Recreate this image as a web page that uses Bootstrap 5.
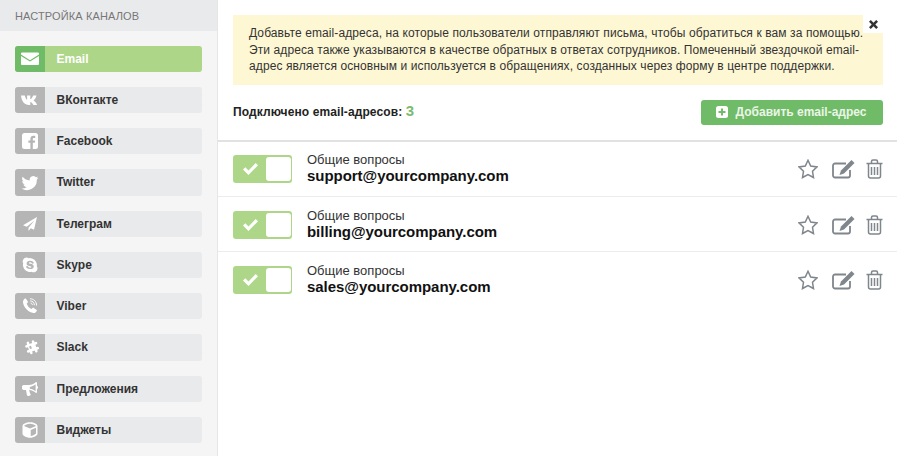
<!DOCTYPE html>
<html lang="ru">

<head>
    <meta charset="UTF-8">
    <meta name="viewport" content="width=device-width, initial-scale=1.0">
    <title>Настройка каналов</title>
    <link href="https://cdn.jsdelivr.net/npm/bootstrap@5.3.3/dist/css/bootstrap.min.css" rel="stylesheet">
    <style>
        body {
            background-color: #fff;
            font-family: "Liberation Sans", Arial, sans-serif;
            color: #222;
            height: 456px;
            overflow: hidden;
        }

        .side-panel {
            width: 218px;
            height: 456px;
            background-color: #f5f5f5;
            border-right: 1px solid #e6e6e6;
        }

        .side-title {
            height: 31px;
            line-height: 33px;
            padding-left: 15px;
            background-color: #e9eaec;
            color: #777;
            font-size: 11px;
            letter-spacing: .12px;
        }

        .side-list {
            padding: 15px 15px 0;
            gap: 15px;
        }

        .chan-item {
            height: 26px;
            width: 187px;
            background-color: #e9eaec;
            border-radius: 3px;
            color: #333;
            font-size: 12px;
            font-weight: 700;
            text-decoration: none;
            overflow: hidden;
        }

        .chan-item:nth-child(4),
        .chan-item:nth-child(8) {
            height: 27px;
            padding-bottom: 1px;
        }

        .chan-item.active-chan {
            background-color: #aed688;
            color: #fff;
        }

        .chan-icon {
            width: 30px;
            background-color: #b5b5b5;
            margin-right: 11.5px;
        }

        .chan-item:nth-child(4) .chan-icon,
        .chan-item:nth-child(8) .chan-icon {
            height: 27px !important;
            margin-bottom: -1px;
        }

        .active-chan .chan-icon {
            background-color: #6fbb68;
        }

        .chan-icon svg {
            width: 18px;
            height: 18px;
            fill: #fff;
        }

        .main-panel {
            width: 679px;
        }

        .info-box {
            margin: 15px 14px 0 15px;
            padding: 10px 16px 0;
            height: 70px;
            background-color: #fef7d3;
            border: 0;
            border-radius: 0;
            color: #333;
            font-size: 12px;
            line-height: 16.5px;
            letter-spacing: .1px;
        }

        .info-close {
            top: 0;
            right: 0;
            width: 20px;
            height: 18px;
            background-color: #fff;
        }

        .info-close svg {
            width: 9px;
            height: 9px;
            fill: #333;
        }

        .count-bar {
            height: 57px;
            padding: 0 14px 0 15px;
            border-bottom: 2px solid #e2e2e2;
            font-size: 12px;
            font-weight: 700;
        }

        .count-text {
            margin-bottom: 2px;
            letter-spacing: .1px;
        }

        .count-num {
            color: #7dbb72;
            font-size: 15px;
        }

        .btn-add-mail {
            width: 182px;
            height: 25px;
            padding: 0 2px 2px 0;
            border: 0;
            border-radius: 3px;
            background-color: #70bb68;
            color: #eaf5e6;
            font-size: 12px;
            font-weight: 700;
        }

        .btn-add-mail svg {
            width: 12px;
            height: 12px;
        }

        .mail-row {
            height: 55px;
            padding: 1px 14px 0 15px;
            border: 0;
            border-bottom: 1px solid #ececec;
            border-radius: 0;
        }

        .mail-row:first-child {
            padding: 0 14px 1px 15px;
        }

        .mail-toggle {
            width: 59px;
            height: 28px;
            background-color: #aed688;
            border-radius: 3px;
            padding: 2px 1px 2px 2px;
            margin-right: 15px;
        }

        .mail-toggle svg {
            width: 15px;
            height: 12px;
            fill: #fff;
            margin-left: 8px;
        }

        .toggle-knob {
            width: 25px;
            height: 24px;
            margin-left: auto;
            background-color: #fff;
            border-radius: 3px;
        }

        .mail-text {
            margin-bottom: 2px;
        }

        .mail-label {
            font-size: 13px;
            line-height: 15px;
            color: #333;
        }

        .mail-addr {
            font-size: 15px;
            line-height: 17px;
            font-weight: 700;
            color: #111;
            letter-spacing: -.04px;
        }

        .row-tools svg {
            fill: none;
            stroke: #7f868c;
            stroke-width: 1.5;
        }

        .tool-star {
            margin-right: 14px;
        }

        .tool-edit {
            margin-right: 11px;
        }
    </style>
</head>

<body>
    <div class="d-flex">
        <div class="side-panel flex-shrink-0">
            <div class="side-title">НАСТРОЙКА КАНАЛОВ</div>
            <div class="side-list d-flex flex-column">
                <a href="#" class="chan-item active-chan d-flex align-items-center">
                    <span class="chan-icon h-100 d-flex align-items-center justify-content-center">
                        <svg viewBox="0 0 18 18"><path d="M1 2.500h16a1 1 0 0 1 1 1v1L9 10.200 0 4.500v-1a1 1 0 0 1 1-1zM0 6l9 5.600L18 6v8a1 1 0 0 1-1 1H1a1 1 0 0 1-1-1z"/></svg>
                    </span>Email
                </a>
                <a href="#" class="chan-item d-flex align-items-center">
                    <span class="chan-icon h-100 d-flex align-items-center justify-content-center">
                        <svg viewBox="0 0 18 18"><path d="M0 4.500h3.800c.5 2 1.300 3.800 2.300 4.400V4.500h3.200v3.800c1.200-.4 2.200-2 2.800-3.800h3.400c-.5 2.300-1.700 4-2.900 4.900 1.300.7 2.800 2.400 3.500 4.600h-3.700c-.7-1.800-1.900-2.900-3.100-3.100V14H8C3.500 14 .6 10.200 0 4.500z"/></svg>
                    </span>ВКонтакте
                </a>
                <a href="#" class="chan-item d-flex align-items-center">
                    <span class="chan-icon h-100 d-flex align-items-center justify-content-center">
                        <svg viewBox="0 0 18 18"><path d="M3.500 1h11a2.500 2.500 0 0 1 2.500 2.500v11a2.500 2.500 0 0 1-2.500 2.500h-2.700v-6.200h2l.3-2.300h-2.300V7c0-.7.2-1.100 1.200-1.100h1.200v-2c-.3 0-1-.1-1.800-.1-1.800 0-3 1.100-3 3.100v1.600h-2v2.300h2V17H3.500A2.500 2.500 0 0 1 1 14.500v-11A2.500 2.500 0 0 1 3.500 1z"/></svg>
                    </span>Facebook
                </a>
                <a href="#" class="chan-item d-flex align-items-center">
                    <span class="chan-icon h-100 d-flex align-items-center justify-content-center">
                        <svg viewBox="0 0 18 18"><path d="M17.500 3.700c-.6.3-1.300.5-2 .6.700-.4 1.300-1.100 1.500-1.900-.7.4-1.400.7-2.200.9A3.500 3.500 0 0 0 8.800 6.500 9.900 9.900 0 0 1 1.700 2.800a3.500 3.500 0 0 0 1.100 4.700c-.6 0-1.100-.2-1.600-.4 0 1.700 1.200 3.100 2.800 3.400-.5.100-1.100.2-1.600.1.400 1.400 1.700 2.400 3.300 2.400A7 7 0 0 1 .5 14.500 9.900 9.900 0 0 0 15.800 5.700c.7-.5 1.300-1.200 1.700-2z"/></svg>
                    </span>Twitter
                </a>
                <a href="#" class="chan-item d-flex align-items-center">
                    <span class="chan-icon h-100 d-flex align-items-center justify-content-center">
                        <svg viewBox="0 0 18 18"><path d="M16 2 2 10.200l3.800 1.600L13.500 5.500 7.500 12.700V16l2.300-2.700 3.200 1.400z"/></svg>
                    </span>Телеграм
                </a>
                <a href="#" class="chan-item d-flex align-items-center">
                    <span class="chan-icon h-100 d-flex align-items-center justify-content-center">
                        <svg viewBox="0 0 18 18"><path fill-rule="evenodd" d="M5.500 1.500c.9 0 1.600.3 2.300.7a7 7 0 0 1 8 8c.4.700.7 1.500.7 2.300a3.900 3.900 0 0 1-5.800 3.300 7 7 0 0 1-8.500-8.500A3.900 3.900 0 0 1 5.500 1.500zM9 4.800c-2 0-3.400 1-3.400 2.600 0 1.500 1.100 2.100 2.900 2.500 1.300.3 1.900.5 1.900 1 0 .4-.5.8-1.400.8-1 0-1.500-.5-1.900-1.100-.3-.4-.6-.6-1.100-.6-.5 0-.9.300-.9.800 0 1.200 1.700 2.300 3.900 2.300 2.300 0 3.700-1 3.700-2.700 0-1.500-1.200-2.200-3-2.600-1.400-.3-1.800-.5-1.800-.9s.4-.7 1.100-.7c.9 0 1.300.4 1.700.9.300.4.600.6 1.100.6.500 0 .9-.3.900-.8C12.700 5.900 11.100 4.800 9 4.800z"/></svg>
                    </span>Skype
                </a>
                <a href="#" class="chan-item d-flex align-items-center">
                    <span class="chan-icon h-100 d-flex align-items-center justify-content-center">
                        <svg viewBox="0 0 18 18"><path d="M4.800 1.500 6.800 4.400c.3.400.2.900-.1 1.200L5.700 6.500c.5 2.100 2.300 4.400 4.800 5.600l1-1.100c.3-.3.800-.4 1.200-.1l2.800 1.900c.4.300.4.800.2 1.200-.6 1.200-1.900 2.300-3.100 2.100C7 15.200 2.400 9.800 2 5.200 1.900 3.500 3 2.100 4.100 1.500c.2-.1.500-.1.700 0z"/><path fill="none" stroke="#fff" stroke-width="1" d="M9 1.800c3.700 0 6.500 2.600 6.600 6.700M9.300 3.900c2.300.1 4 1.800 4.100 4.300M9.600 6c1 .1 1.700.9 1.800 2"/></svg>
                    </span>Viber
                </a>
                <a href="#" class="chan-item d-flex align-items-center">
                    <span class="chan-icon h-100 d-flex align-items-center justify-content-center">
                        <svg viewBox="0 0 18 18"><path fill-rule="evenodd" d="M6.500 2.500a1.300 1.300 0 0 1 1.600.9l.5 1.500 2.600-.9-.5-1.400a1.300 1.300 0 0 1 2.400-.8l.5 1.400 1.300-.4a1.300 1.300 0 0 1 .8 2.400l-1.300.5.900 2.600 1.300-.5a1.300 1.300 0 0 1 .8 2.400l-1.300.5.500 1.400a1.300 1.300 0 0 1-2.400.8l-.5-1.400-2.600.9.500 1.400a1.300 1.300 0 0 1-2.400.8l-.5-1.400-1.400.5a1.300 1.300 0 0 1-.8-2.400l1.400-.5-.9-2.600-1.400.5a1.300 1.300 0 0 1-.8-2.400l1.400-.5-.5-1.400a1.300 1.300 0 0 1 .9-1.700zM8.100 7.400l.9 2.600 1.900-.6-.9-2.600z"/></svg>
                    </span>Slack
                </a>
                <a href="#" class="chan-item d-flex align-items-center">
                    <span class="chan-icon h-100 d-flex align-items-center justify-content-center">
                        <svg viewBox="0 0 18 18"><path fill-rule="evenodd" d="M15 2c.6 0 1 .5 1 1v2.800a1.900 1.900 0 0 1 0 3.400V12c0 .6-.4 1-1 1-2-1.700-4.200-2.800-6.900-3l.9 3.300c.1.500.9.800.7 1.500-.2.600-.9 1.200-2.100 1.200-.9 0-1.500-.4-1.700-1.100L5 10H2.800A1.800 1.800 0 0 1 1 8.200V6.800C1 5.800 1.800 5 2.800 5h5c2.800 0 5.200-1.100 7.200-3zm-.4 2.300C12.800 5.700 10.900 6.600 8.800 6.900v1.900c2.100.3 4 1.100 5.800 2.500z"/></svg>
                    </span>Предложения
                </a>
                <a href="#" class="chan-item d-flex align-items-center">
                    <span class="chan-icon h-100 d-flex align-items-center justify-content-center">
                        <svg viewBox="0 0 18 18"><path fill-rule="evenodd" d="M9 1.200c4.200 0 7.500 1.800 7.500 3.800v8c0 1.100-3.400 3.800-7.500 3.800S1.500 14.100 1.500 13V5c0-2 3.300-3.800 7.500-3.800zM3 5l6 2.600L15 5c-1-1-3.300-2.200-6-2.200S4 4 3 5zm6.700 4v6c1.800-.2 3.700-1 5.300-2.400V6.800z"/></svg>
                    </span>Виджеты
                </a>
            </div>
        </div>

        <div class="main-panel">
            <div class="alert info-box position-relative mb-0">
                Добавьте email-адреса, на которые пользователи отправляют письма, чтобы обратиться к вам за помощью. Эти адреса также указываются в качестве обратных в ответах сотрудников. Помеченный звездочкой email-адрес является основным и используется в обращениях, созданных через форму в центре поддержки.
                <span class="info-close position-absolute d-flex align-items-center justify-content-center">
                    <svg viewBox="0 0 9 9"><path d="M1.800 0 4.500 2.700 7.200 0 9 1.800 6.300 4.500 9 7.200 7.200 9 4.500 6.300 1.800 9 0 7.200 2.700 4.500 0 1.800z"/></svg>
                </span>
            </div>

            <div class="count-bar d-flex align-items-center justify-content-between">
                <span class="count-text">Подключено email-адресов: <span class="count-num">3</span></span>
                <button class="btn btn-add-mail d-flex align-items-center justify-content-center gap-2">
                    <svg viewBox="0 0 12 12"><rect width="12" height="12" rx="2.500" fill="#fff"/><path d="M6 2.500v7M2.500 6h7" stroke="#70bb68" stroke-width="2"/></svg>
                    Добавить email-адрес
                </button>
            </div>

            <ul class="list-group list-group-flush">
                <li class="list-group-item mail-row d-flex align-items-center">
                    <div class="mail-toggle d-flex align-items-center">
                        <svg viewBox="0 0 15 12"><path d="M5.500 12 0 6.500l2.300-2.300 3.200 3.200L12.700 0 15 2.300z"/></svg>
                        <span class="toggle-knob"></span>
                    </div>
                    <div class="mail-text">
                        <div class="mail-label">Общие вопросы</div>
                        <div class="mail-addr">support@yourcompany.com</div>
                    </div>
                    <div class="row-tools d-flex align-items-center ms-auto">
                        <svg class="tool-star" width="20" height="20" viewBox="0 0 20 20"><path d="M10 1.300l2.700 5.700 6.300.9-4.500 4.400 1 6.200-5.500-3-5.500 3 1-6.200L1 7.900l6.300-.9z"/></svg>
                        <svg class="tool-edit" width="23" height="20" viewBox="0 0 23 20"><path stroke-width="1.800" d="M18 11v5.500a2 2 0 0 1-2 2H3a2 2 0 0 1-2-2V6.500a2 2 0 0 1 2-2h11"/><path fill="#7f868c" stroke="none" d="M19.500 1l3 3-10.500 10.500-4.500 1.500 1.500-4.500z"/></svg>
                        <svg width="17" height="20" viewBox="0 0 17 20"><path d="M.5 4.500h16M2.500 4.500V17a2 2 0 0 0 2 2h8a2 2 0 0 0 2-2V4.500M5.500 4.500V2.500A1.500 1.500 0 0 1 7 1h3a1.500 1.500 0 0 1 1.500 1.500v2M5.500 8v8M8.500 8v8M11.500 8v8"/></svg>
                    </div>
                </li>
                <li class="list-group-item mail-row d-flex align-items-center">
                    <div class="mail-toggle d-flex align-items-center">
                        <svg viewBox="0 0 15 12"><path d="M5.500 12 0 6.500l2.300-2.300 3.200 3.200L12.700 0 15 2.300z"/></svg>
                        <span class="toggle-knob"></span>
                    </div>
                    <div class="mail-text">
                        <div class="mail-label">Общие вопросы</div>
                        <div class="mail-addr">billing@yourcompany.com</div>
                    </div>
                    <div class="row-tools d-flex align-items-center ms-auto">
                        <svg class="tool-star" width="20" height="20" viewBox="0 0 20 20"><path d="M10 1.300l2.700 5.700 6.300.9-4.500 4.400 1 6.200-5.500-3-5.500 3 1-6.200L1 7.900l6.300-.9z"/></svg>
                        <svg class="tool-edit" width="23" height="20" viewBox="0 0 23 20"><path stroke-width="1.800" d="M18 11v5.500a2 2 0 0 1-2 2H3a2 2 0 0 1-2-2V6.500a2 2 0 0 1 2-2h11"/><path fill="#7f868c" stroke="none" d="M19.500 1l3 3-10.500 10.500-4.500 1.500 1.500-4.500z"/></svg>
                        <svg width="17" height="20" viewBox="0 0 17 20"><path d="M.5 4.500h16M2.500 4.500V17a2 2 0 0 0 2 2h8a2 2 0 0 0 2-2V4.500M5.500 4.500V2.500A1.500 1.500 0 0 1 7 1h3a1.500 1.500 0 0 1 1.500 1.500v2M5.500 8v8M8.500 8v8M11.500 8v8"/></svg>
                    </div>
                </li>
                <li class="list-group-item mail-row d-flex align-items-center">
                    <div class="mail-toggle d-flex align-items-center">
                        <svg viewBox="0 0 15 12"><path d="M5.500 12 0 6.500l2.300-2.300 3.200 3.200L12.700 0 15 2.300z"/></svg>
                        <span class="toggle-knob"></span>
                    </div>
                    <div class="mail-text">
                        <div class="mail-label">Общие вопросы</div>
                        <div class="mail-addr">sales@yourcompany.com</div>
                    </div>
                    <div class="row-tools d-flex align-items-center ms-auto">
                        <svg class="tool-star" width="20" height="20" viewBox="0 0 20 20"><path d="M10 1.300l2.700 5.700 6.300.9-4.500 4.400 1 6.200-5.500-3-5.500 3 1-6.200L1 7.900l6.300-.9z"/></svg>
                        <svg class="tool-edit" width="23" height="20" viewBox="0 0 23 20"><path stroke-width="1.800" d="M18 11v5.500a2 2 0 0 1-2 2H3a2 2 0 0 1-2-2V6.500a2 2 0 0 1 2-2h11"/><path fill="#7f868c" stroke="none" d="M19.500 1l3 3-10.500 10.500-4.500 1.500 1.500-4.500z"/></svg>
                        <svg width="17" height="20" viewBox="0 0 17 20"><path d="M.5 4.500h16M2.500 4.500V17a2 2 0 0 0 2 2h8a2 2 0 0 0 2-2V4.500M5.500 4.500V2.500A1.500 1.500 0 0 1 7 1h3a1.500 1.500 0 0 1 1.500 1.500v2M5.500 8v8M8.500 8v8M11.500 8v8"/></svg>
                    </div>
                </li>
            </ul>
        </div>
    </div>

    <script src="https://cdn.jsdelivr.net/npm/bootstrap@5.3.3/dist/js/bootstrap.bundle.min.js"></script>
</body>

</html>
